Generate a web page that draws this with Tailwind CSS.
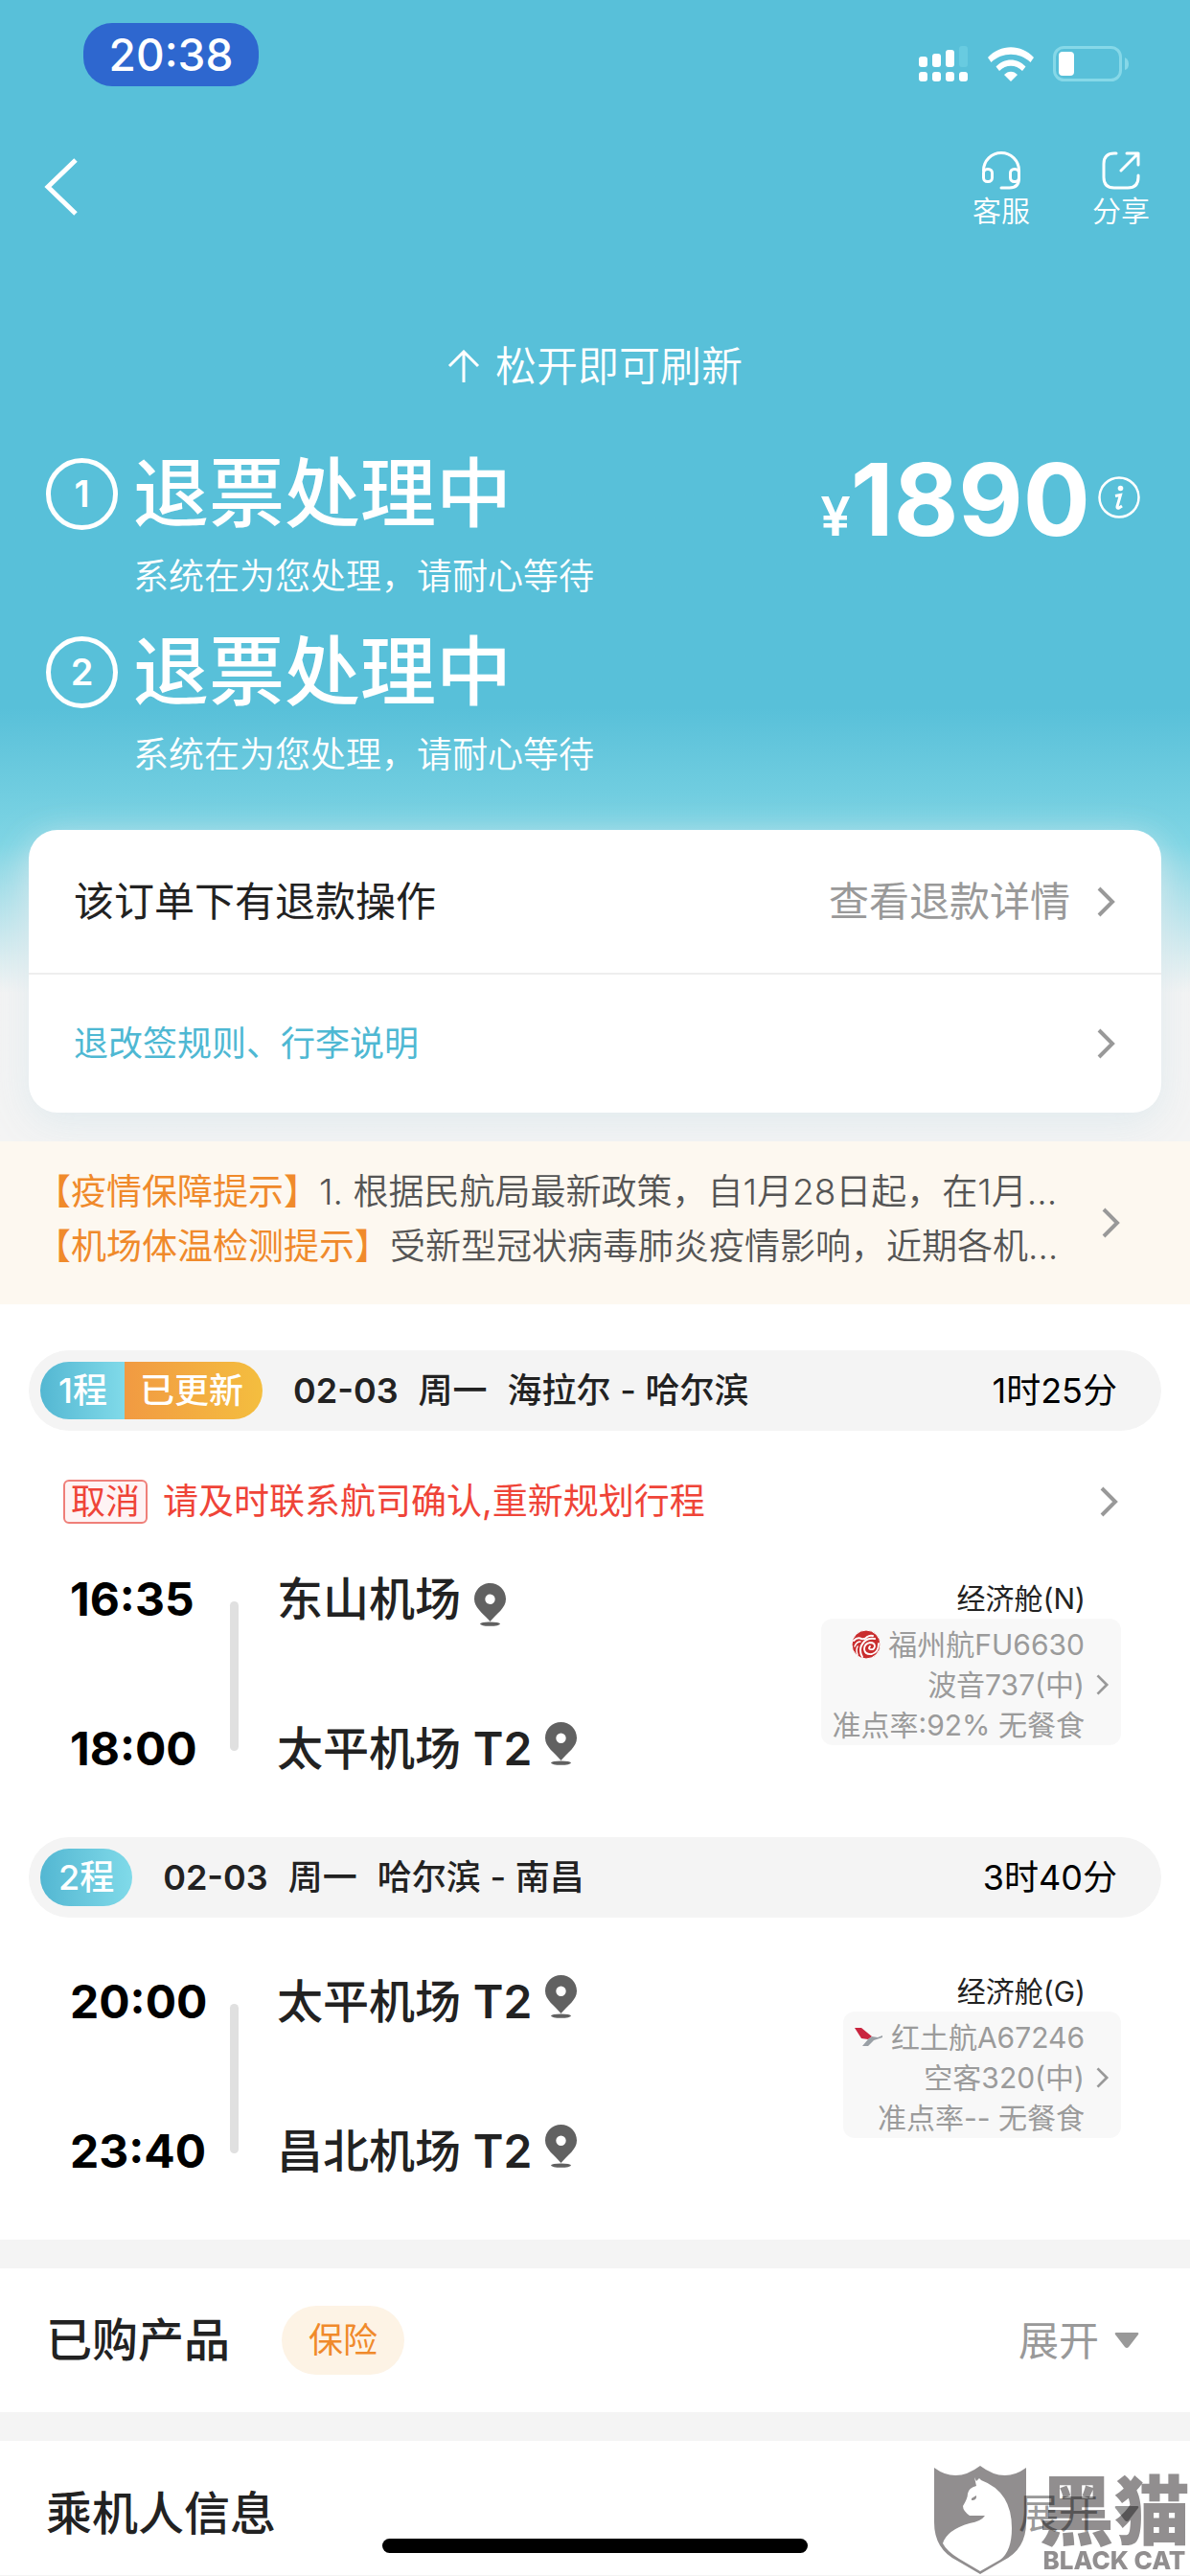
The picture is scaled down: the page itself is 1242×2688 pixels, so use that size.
<!DOCTYPE html>
<html lang="zh-CN">
  <head>
    <meta charset="UTF-8" />
    <meta name="viewport" content="width=device-width, initial-scale=1.0" />
    <title>订单详情</title>
    <script src="https://cdn.jsdelivr.net/npm/@tailwindcss/browser@4"></script>
  </head>
  <body
    class="min-h-screen bg-[#f4f4f4] font-['Inter','Noto_Sans_CJK_SC',sans-serif] text-[#222222]"
  >
    <!-- Shared icons -->
    <svg class="hidden">
      <symbol id="chevron" viewBox="0 0 20 32">
        <path d="M2 2l14 14L2 30" fill="none" stroke="#999" stroke-width="4" />
      </symbol>
      <symbol id="pin" viewBox="0 0 33 45">
        <path
          d="M16.500 0C7.400 0 0 7.400 0 16.500C0 26 9.500 31.500 16.500 40C23.500 31.500 33 26 33 16.500C33 7.400 25.600 0 16.500 0zm0 11.500a5.200 5.200 0 1 1 0 10.400a5.200 5.200 0 0 1 0-10.400z"
          fill="#616161"
          fill-rule="evenodd"
        />
        <ellipse cx="16.500" cy="42.600" rx="10.500" ry="2.200" fill="#616161" />
      </symbol>
      <symbol id="caret" viewBox="0 0 26 18">
        <path d="M2 1h22q2 0 1 2L15 16q-2 2-4 0L1 3q-1-2 1-2z" fill="#999" />
      </symbol>
    </svg>

    <!-- Header -->
    <header
      class="bg-linear-to-b from-[#58c0d9] from-[62%] via-[#7ed5e4] via-[74%] to-[#f4f4f4] to-[87%] px-[30px] pb-[30px]"
    >
      <!-- Status bar -->
      <div class="flex justify-between pt-6 pr-[33px] pl-[57px]">
        <span
          class="flex h-[66px] w-[183px] items-center justify-center rounded-[30px] bg-[#2e67cf] text-[46px] font-medium text-white"
          >20:38</span
        >
        <div class="flex items-center gap-5 pt-5">
          <svg class="h-[38px] w-[52px]" viewBox="0 0 52 38" fill="#fff">
            <rect x="0" y="11" width="9" height="11" rx="3" />
            <rect x="14" y="8" width="9" height="14" rx="3" />
            <rect x="28" y="4" width="9" height="18" rx="3" />
            <rect x="42" y="0" width="9" height="22" rx="3" fill="#68cbe0" />
            <rect x="0" y="27" width="9" height="10" rx="3" />
            <rect x="14" y="27" width="9" height="10" rx="3" />
            <rect x="28" y="27" width="9" height="10" rx="3" />
            <rect x="42" y="27" width="9" height="10" rx="3" />
          </svg>
          <svg class="h-9 w-12" viewBox="0 0 48 36" fill="#fff">
            <path d="M0 11C13-3.500 35-3.500 48 11L44.500 16C33 5 15 5 3.500 16z" />
            <path d="M8.500 20.500C17 11 31 11 39.500 20.500L36 25C29 18 19 18 12 25z" />
            <path d="M17 29C21 24.500 27 24.500 31 29L24 36z" />
          </svg>
          <svg class="h-[38px] w-[80px]" viewBox="0 0 80 38">
            <rect x="1.500" y="1.500" width="69" height="34" rx="10" fill="none" stroke="#86d8e8" stroke-width="3" />
            <rect x="6" y="6" width="16" height="25" rx="4" fill="#fff" />
            <path d="M75 12q4 2 4 7t-4 6z" fill="#86d8e8" />
          </svg>
        </div>
      </div>

      <!-- Navigation -->
      <nav class="mt-[62px] flex items-center justify-between pr-3 pl-4 text-white">
        <button type="button" aria-label="返回">
          <svg class="h-[60px] w-[36px]" viewBox="0 0 36 60">
            <path d="M33 2L4 30L33 58" fill="none" stroke="#fff" stroke-width="5" />
          </svg>
        </button>
        <div class="flex gap-[65px] pt-1.5 text-[30px] leading-[36px] font-[350]">
          <button type="button" class="flex flex-col items-center gap-1">
            <svg class="h-10 w-10" viewBox="0 0 40 40" fill="none" stroke="#fff" stroke-width="3" stroke-linecap="round">
              <path d="M1.500 20a18.500 18.500 0 0 1 37 0v8q0 10-10 10H20" />
              <rect x="1.500" y="18.500" width="9" height="13" rx="4" />
              <rect x="29.500" y="18.500" width="9" height="13" rx="4" />
            </svg>
            客服
          </button>
          <button type="button" class="flex flex-col items-center gap-1">
            <svg class="h-10 w-10" viewBox="0 0 40 40" fill="none" stroke="#fff" stroke-width="3" stroke-linecap="round" stroke-linejoin="round">
              <path d="M15 2H13Q2 2 2 13V27Q2 38 13 38H27Q38 38 38 27V25" />
              <path d="M26 2H38V14M38 2L20 20" />
            </svg>
            分享
          </button>
        </div>
      </nav>

      <p class="mt-[114px] flex items-center justify-center gap-4 text-[43px] leading-[60px] font-[350] text-white">
        <svg class="h-[34px] w-[34px]" viewBox="0 0 34 34" fill="none" stroke="#fff" stroke-width="3">
          <path d="M17 34V2M2 17L17 2L32 17" />
        </svg>
        松开即可刷新
      </p>

      <!-- Order state -->
      <div class="mt-[49px] flex items-start justify-between px-[18px] text-white">
        <ol class="flex flex-col gap-3">
          <li class="grid grid-cols-[75px_auto] gap-x-4">
            <span class="flex size-[75px] items-center justify-center self-center rounded-full border-[5px] border-white text-[38px] font-semibold">1</span>
            <h2 class="text-[79px] leading-[108px] font-medium">退票处理中</h2>
            <p class="col-start-2 text-[37px] leading-[66px] font-[350]">系统在为您处理，请耐心等待</p>
          </li>
          <li class="grid grid-cols-[75px_auto] gap-x-4">
            <span class="flex size-[75px] items-center justify-center self-center rounded-full border-[5px] border-white text-[38px] font-semibold">2</span>
            <h2 class="text-[79px] leading-[108px] font-medium">退票处理中</h2>
            <p class="col-start-2 text-[37px] leading-[66px] font-[350]">系统在为您处理，请耐心等待</p>
          </li>
        </ol>
        <div class="flex items-start gap-2 pr-1">
          <p class="text-[104px] leading-[120px] font-bold"><span class="text-[56px] font-semibold">¥</span>1890</p>
          <button type="button" class="mt-9" aria-label="价格说明">
            <svg class="size-11" viewBox="0 0 44 44" fill="none" stroke="#fff">
              <circle cx="22" cy="22" r="20.500" stroke-width="2.500" />
              <circle cx="23.500" cy="12.500" r="2.800" fill="#fff" stroke="none" />
              <path d="M18 20.500L23.500 19.500L20 31.500Q19.500 34 22 33L25 31" stroke-width="3" />
            </svg>
          </button>
        </div>
      </div>

      <!-- Refund card -->
      <div class="mt-[45px] rounded-[30px] bg-white shadow-[0_10px_40px_rgba(222,233,237,0.9)]">
        <a href="#" class="flex h-[151px] items-center justify-between border-b-2 border-[#eeeeee] px-[47px] text-[42px]">
          该订单下有退款操作
          <span class="flex items-center gap-7 text-[#999999]">
            查看退款详情
            <svg class="h-8 w-5"><use href="#chevron" /></svg>
          </span>
        </a>
        <a href="#" class="flex h-[144px] items-center justify-between px-[47px] text-[36px] text-[#4eb8d3]">
          退改签规则、行李说明
          <svg class="h-8 w-5"><use href="#chevron" /></svg>
        </a>
      </div>
    </header>

    <!-- Notice -->
    <a href="#" class="flex h-[170px] items-center justify-between gap-8 bg-[#fdf8f0] pr-[72px] pl-[37px] text-[37px] leading-[57px] font-[350] text-[#555555]">
      <span class="min-w-0 flex-1 pb-2 whitespace-nowrap">
        <span class="block"><span class="font-normal text-[#f08a2b]">【疫情保障提示】</span>1. 根据民航局最新政策，自1月28日起，在1月...</span>
        <span class="block"><span class="font-normal text-[#f08a2b]">【机场体温检测提示】</span>受新型冠状病毒肺炎疫情影响，近期各机…</span>
      </span>
      <svg class="h-8 w-5"><use href="#chevron" /></svg>
    </a>

    <main>
      <!-- Flights -->
      <section class="bg-white px-[30px] pt-12 pb-[64px]">
        <div class="flex h-[84px] items-center rounded-full bg-[#f4f4f4] pr-[46px] pl-3 text-[36px]">
          <span class="flex h-[60px] overflow-hidden rounded-[30px] leading-[60px] font-medium text-white">
            <span class="bg-linear-to-r from-[#53b7d2] to-[#80dae9] pr-[18px] pl-[19px]">1程</span>
            <span class="bg-linear-to-r from-[#f19a42] to-[#f4be3f] pr-5 pl-4">已更新</span>
          </span>
          <h3 class="ml-8 flex gap-[21px] font-medium">
            <span class="font-semibold">02-03</span>
            <span>周一</span>
            <span>海拉尔 - 哈尔滨</span>
          </h3>
          <span class="ml-auto text-black">1时25分</span>
        </div>

        <a href="#" class="mt-[50px] flex h-12 items-center gap-4 pr-11 pl-9 text-[37px] text-[#ef4438]">
          <span class="rounded-[6px] border-2 border-[#ef7f79] bg-[#fef3f4] px-1.5 text-[36px] leading-[42px]">取消</span>
          请及时联系航司确认,重新规划行程
          <svg class="ml-auto h-8 w-5"><use href="#chevron" /></svg>
        </a>

        <div class="mt-[50px] flex pr-[42px] pl-[43px] text-[48px] leading-[56px]">
          <div class="flex w-[167px] flex-col gap-[100px] font-bold text-black">
            <time>16:35</time>
            <time>18:00</time>
          </div>
          <div class="mt-[30px] h-[156px] w-[9px] rounded-full bg-[#e0e0e0]"></div>
          <div class="ml-10 flex flex-col gap-[100px] font-medium">
            <p class="flex items-end gap-3.5">
              东山机场
              <svg class="h-[45px] w-[33px]"><use href="#pin" /></svg>
            </p>
            <p class="flex items-start gap-3.5">
              <span>太平机场 <b class="font-semibold">T2</b></span>
              <svg class="h-[45px] w-[33px]"><use href="#pin" /></svg>
            </p>
          </div>
          <div class="mt-1.5 ml-auto flex flex-col items-end text-[30px] leading-[42px]">
            <p class="pr-[37px]">经济舱(N)</p>
            <a href="#" class="flex items-center gap-3 rounded-[12px] bg-[#f8f8f8] pt-1.5 pr-3 pl-3 text-[#9b9b9b]">
              <span class="flex flex-col items-end">
                <span class="flex items-center gap-2">
                  <svg class="size-[30px]" viewBox="0 0 30 30" fill="none" stroke="#fff" stroke-linecap="round">
                    <circle cx="15" cy="15" r="15" fill="#c92d2e" />
                    <path d="M2 11Q6 7 10 9Q14 10 16 7Q19 5 22 6" stroke-width="2" />
                    <path d="M24 9Q17 8 13 12Q9 16 9 21Q9 25 11 28" stroke-width="2" />
                    <path d="M3 17Q5 12 9 12M6 26Q4 21 6 17" stroke-width="1.500" />
                    <path d="M28 14Q28 23 21 25Q14 26 13 20Q13 14 19 13Q24 13 24 17Q23 21 19 20Q17 19 19 17" stroke-width="1.800" />
                  </svg>
                  福州航FU6630
                </span>
                <span>波音737(中)</span>
                <span>准点率:92% 无餐食</span>
              </span>
              <svg class="h-[22px] w-[14px]"><use href="#chevron" /></svg>
            </a>
          </div>
        </div>

        <div class="mt-[64px] flex h-[84px] items-center rounded-full bg-[#f4f4f4] pr-[46px] pl-3 text-[36px]">
          <span class="h-[60px] rounded-[30px] bg-linear-to-r from-[#53b7d2] to-[#80dae9] px-[19px] leading-[60px] font-medium text-white">2程</span>
          <h3 class="ml-8 flex gap-[21px] font-medium">
            <span class="font-semibold">02-03</span>
            <span>周一</span>
            <span>哈尔滨 - 南昌</span>
          </h3>
          <span class="ml-auto text-black">3时40分</span>
        </div>

        <div class="mt-[60px] flex pr-[42px] pl-[43px] text-[48px] leading-[56px]">
          <div class="flex w-[167px] flex-col gap-[100px] font-bold text-black">
            <time>20:00</time>
            <time>23:40</time>
          </div>
          <div class="mt-[30px] h-[156px] w-[9px] rounded-full bg-[#e0e0e0]"></div>
          <div class="ml-10 flex flex-col gap-[100px] font-medium">
            <p class="flex items-start gap-3.5">
              <span>太平机场 <b class="font-semibold">T2</b></span>
              <svg class="h-[45px] w-[33px]"><use href="#pin" /></svg>
            </p>
            <p class="flex items-start gap-3.5">
              <span>昌北机场 <b class="font-semibold">T2</b></span>
              <svg class="h-[45px] w-[33px]"><use href="#pin" /></svg>
            </p>
          </div>
          <div class="-mt-1 ml-auto flex flex-col items-end text-[30px] leading-[42px]">
            <p class="pr-[37px]">经济舱(G)</p>
            <a href="#" class="flex items-center gap-3 rounded-[12px] bg-[#f8f8f8] pt-1.5 pr-3 pl-3 text-[#9b9b9b]">
              <span class="flex flex-col items-end">
                <span class="flex items-center gap-2">
                  <svg class="size-[30px]" viewBox="0 0 30 30">
                    <path d="M0 5H7L18 14L14 17L7 16z" fill="#c9253f" />
                    <path d="M14 17L18 14L24 15L29 13V15L20 18L14 24H8z" fill="#9aa0a6" />
                  </svg>
                  红土航A67246
                </span>
                <span>空客320(中)</span>
                <span>准点率-- 无餐食</span>
              </span>
              <svg class="h-[22px] w-[14px]"><use href="#chevron" /></svg>
            </a>
          </div>
        </div>
      </section>

      <!-- Purchased products -->
      <section class="mt-[30px] flex h-[150px] items-center bg-white pr-[53px] pl-12">
        <h2 class="text-[48px] font-medium">已购产品</h2>
        <span class="ml-[54px] rounded-full bg-[#fdf3e5] px-7 text-[36px] leading-[72px] text-[#f08a2b]">保险</span>
        <button type="button" class="ml-auto flex items-center gap-4 text-[42px] text-[#999999]">
          展开
          <svg class="h-[18px] w-[26px]"><use href="#caret" /></svg>
        </button>
      </section>

      <!-- Passengers -->
      <section class="mt-[30px] flex items-center bg-white pt-10 pr-[53px] pb-7 pl-12 leading-[72px]">
        <h2 class="text-[48px] font-medium">乘机人信息</h2>
        <button type="button" class="ml-auto flex items-center gap-4 text-[42px] text-[#999999]">
          展开
          <svg class="h-[18px] w-[26px]"><use href="#caret" /></svg>
        </button>
      </section>
    </main>

    <!-- Home indicator -->
    <div class="fixed bottom-6 left-1/2 h-[15px] w-[444px] -translate-x-1/2 rounded-full bg-black"></div>

    <!-- Watermark -->
    <div class="fixed right-0 bottom-0 flex items-end gap-3 text-[#918e8f] mix-blend-multiply">
      <svg class="h-[116px] w-[98px]" viewBox="0 0 98 116">
        <path
          d="M1 3Q24 20 49 1Q74 20 97 3V60Q97 88 73 100L49 114L25 100Q1 88 1 60z"
          fill="#918e8f"
        />
        <path
          d="M43 13L45 17L48 14L50 16Q82 28 82 66Q82 90 70 99L49 111L27 98Q14 90 10 82Q14 68 38 61Q50 59 54 53H38Q31 48 31 43Q36 35 36 30Q37 24 45 22z"
          fill="#fff"
        />
        <path d="M40 35l5-3q1 5-5 5z" fill="#918e8f" />
      </svg>
      <div class="flex flex-col items-center pb-0.5">
        <span class="text-[79px] leading-[74px] font-black">黑猫</span>
        <span class="text-[26px] leading-[28px] font-extrabold">BLACK CAT</span>
      </div>
    </div>
  </body>
</html>
